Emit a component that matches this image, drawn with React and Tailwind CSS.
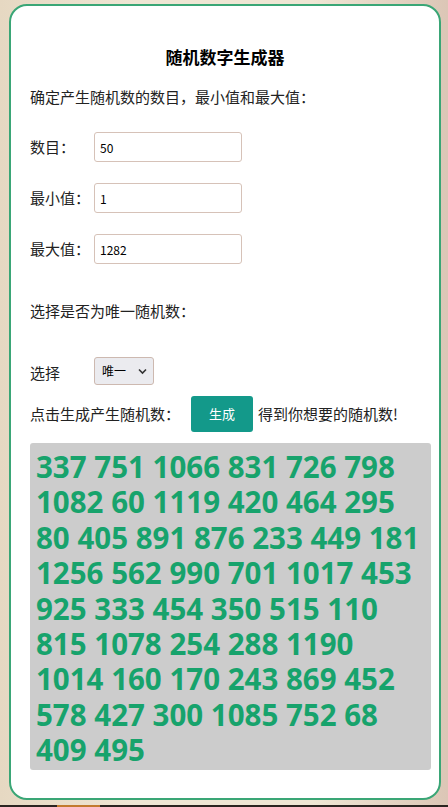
import React, { useState } from 'react';

const nums =
  '337 751 1066 831 726 798 1082 60 1119 420 464 295 80 405 891 876 233 449 181 1256 562 990 701 1017 453 925 333 454 350 515 110 815 1078 254 288 1190 1014 160 170 243 869 452 578 427 300 1085 752 68 409 495';

const cjk = { fontFamily: '"Noto Sans CJK SC", "Noto Sans", sans-serif' };

const Row = ({ label, value }) => (
  <div className="flex items-center h-[30px]">
    <span className="w-[64px] text-[15px] text-[#222]">{label}</span>
    <input
      defaultValue={value}
      className="w-[148px] h-[30px] border border-[#d6c2b8] rounded-[3px] px-[5px] text-[12px] text-black outline-none"
    />
  </div>
);

const App = () => {
  const [mode, setMode] = useState('unique');

  return (
    <div
      className="w-[448px] h-[807px] overflow-hidden bg-[linear-gradient(90deg,#e6d8c2_0%,#efe6d4_30%,#efe6d4_70%,#dcc6b6_100%)] relative"
      style={cjk}
    >
      <div className="ml-[9px] mt-[4px] w-[432px] h-[796px] bg-white border-2 border-[#3aa676] rounded-[18px] pt-[39px] pl-[19px]">
        <h1 className="text-center pr-[19px] text-[17px] leading-[24px] font-bold text-black">随机数字生成器</h1>
        <p className="mt-[18px] text-[15px] leading-[20px] text-[#222]">确定产生随机数的数目，最小值和最大值：</p>

        <div className="mt-[25px] flex flex-col gap-[21px]">
          <Row label="数目：" value="50" />
          <Row label="最小值：" value="1" />
          <Row label="最大值：" value="1282" />
        </div>

        <p className="mt-[37px] text-[15px] leading-[20px] text-[#222]">选择是否为唯一随机数：</p>

        <div className="mt-[36px] flex items-center h-[28px]">
          <span className="w-[64px] text-[15px] text-[#222] pt-[5px]">选择</span>
          <div className="relative w-[60px] h-[28px]">
            <select
              value={mode}
              onChange={(e) => setMode(e.target.value)}
              className="appearance-none w-full h-full bg-[#ebebef] border border-[#cdb9b0] rounded-[3px] pl-[7px] text-[12px] text-black outline-none"
            >
              <option value="unique">唯一</option>
              <option value="repeat">可重复</option>
            </select>
            <svg className="absolute right-[7px] top-[10px] pointer-events-none" width="9" height="8" viewBox="0 0 9 8">
              <path d="M1 2.5 L4.5 6 L8 2.5" fill="none" stroke="#333" strokeWidth="1.6" />
            </svg>
          </div>
        </div>

        <div className="mt-[11px] flex items-center h-[36px] text-[15px] text-[#222]">
          <span className="w-[161px]">点击生成产生随机数：</span>
          <button className="w-[62px] h-[36px] bg-[#13998a] text-white text-[13px] rounded-[3px]">生成</button>
          <span className="ml-[5px]">得到你想要的随机数!</span>
        </div>

        <div
          className="mt-[11px] w-[401px] h-[327px] bg-[#cccccc] rounded-[3px] px-[6px] pt-[6px] text-[29.5px] leading-[35.4px] font-bold text-[#17a36c] break-words"
          style={{ fontFamily: '"Open Sans", "Noto Sans", sans-serif' }}
        >
          {nums}
        </div>
      </div>
      <div className="absolute left-0 bottom-0 w-full h-[2px] bg-[#2b2420]">
        <div className="ml-[57px] w-[43px] h-full bg-[#c27a2e]" />
      </div>
    </div>
  );
};

export default App;
